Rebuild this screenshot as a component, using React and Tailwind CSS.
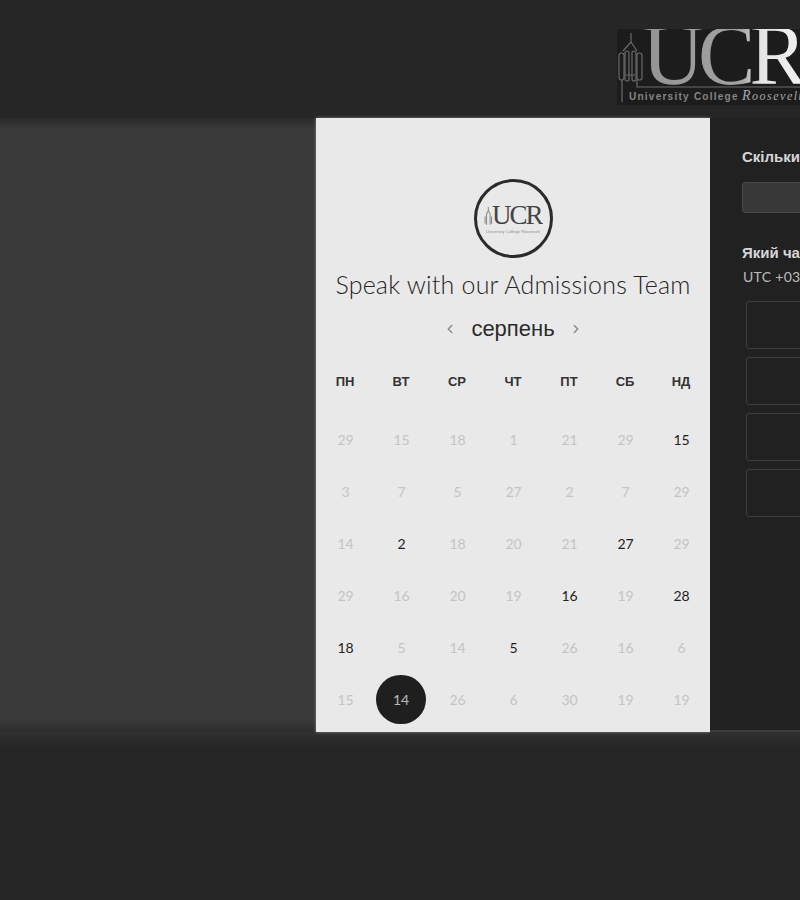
import React from 'react';
import { ChevronLeft, ChevronRight } from 'lucide-react';

const weekDays = ['ПН', 'ВТ', 'СР', 'ЧТ', 'ПТ', 'СБ', 'НД'];

// active: dark number, selected: black circle, the rest are disabled
const days = [
    [29, 15, 18, 1, 21, 29, { n: 15, active: true }],
    [3, 7, 5, 27, 2, 7, 29],
    [14, { n: 2, active: true }, 18, 20, 21, { n: 27, active: true }, 29],
    [29, 16, 20, 19, { n: 16, active: true }, 19, { n: 28, active: true }],
    [{ n: 18, active: true }, 5, 14, { n: 5, active: true }, 26, 16, 6],
    [15, { n: 14, selected: true }, 26, 6, 30, 19, 19],
];

function Tower({ stroke }) {
    return (
        <g fill="none" stroke={stroke} strokeWidth="1.2">
            <path d="M14 4v9M14 13l-8 9M14 13l6 9" />
            <rect x="2" y="24" width="5" height="27" rx="2.5" />
            <rect x="8" y="22" width="4" height="30" rx="2" />
            <rect x="15" y="22" width="4" height="30" rx="2" />
            <rect x="20" y="24" width="5" height="27" rx="2.5" />
            <path d="M9 46h9M5 51v22M20 51v7h163" />
        </g>
    );
}

function HeaderLogo() {
    return (
        <svg width="183" height="76" viewBox="0 0 183 76" className="block">
            <defs>
                <linearGradient id="ucrFill" x1="0" x2="1" y1="0" y2="0">
                    <stop offset="0" stopColor="#939393" />
                    <stop offset="0.6" stopColor="#a3a3a3" />
                    <stop offset="0.72" stopColor="#e6e6e6" />
                    <stop offset="1" stopColor="#f2f2f2" />
                </linearGradient>
            </defs>
            <rect width="183" height="76" fill="#1c1c1c" />
            <Tower stroke="#6a6a6a" />
            <text x="25" y="55" fontFamily='"Liberation Serif", serif' fontSize="86" letterSpacing="-6" fill="url(#ucrFill)">UCR</text>
            <text x="12" y="71" fontFamily='"Liberation Sans", sans-serif' fontWeight="700" fontSize="10" letterSpacing="1.25" fill="#858585">University College</text>
            <text x="125" y="71" fontFamily='"Liberation Serif", serif' fontStyle="italic" fontSize="12" letterSpacing="1.5" fill="#a8a8a8">
                <tspan fontSize="14">R</tspan>oosevelt
            </text>
        </svg>
    );
}

function BadgeLogo() {
    return (
        <svg width="60" height="32" viewBox="0 0 60 32" className="block">
            <g transform="translate(1 3) scale(0.36)" opacity="0.5">
                <path d="M12 3v10M12 13l-5 9v30M12 13l5 9v30M3 29v20M21 29v20" fill="none" stroke="#333" strokeWidth="3" />
            </g>
            <text x="9" y="21" fontFamily='"Liberation Serif", serif' fontSize="27" letterSpacing="-2" fill="#444444">UCR</text>
            <text x="3" y="30" fontFamily='"Liberation Sans", sans-serif' fontSize="4" letterSpacing="0.1" fill="#8a8a8a">University College Roosevelt</text>
        </svg>
    );
}

function DayCell({ day }) {
    const n = typeof day === 'object' ? day.n : day;

    if (day.selected) {
        return (
            <div className="h-[52px] flex items-center justify-center">
                <div className="w-[50px] h-[49px] rounded-full bg-[#1f1f1f] text-[#b9b9b9] text-[14px] flex items-center justify-center">{n}</div>
            </div>
        );
    }

    return (
        <div className={`h-[52px] pl-[1px] flex items-center justify-center text-[14px] ${day.active ? 'text-[#1f1f1f]' : 'text-[#c4c4c4]'}`}>
            {n}
        </div>
    );
}

export default function App() {
    return (
        <div className="w-[800px] h-[900px] overflow-hidden bg-[#262626] flex flex-col">
            <header className="h-[118px] shrink-0 pt-[29px] pl-[617px]">
                <HeaderLogo />
            </header>

            <main className="relative z-10 h-[614px] shrink-0 flex">
                <div className="w-[316px] shrink-0 bg-[linear-gradient(to_bottom,#2b2b2b_0px,#3a3a3a_12px,#3a3a3a_600px,#2d2d2d_100%)]"></div>

                <section className="w-[394px] shrink-0 bg-[#e9e9e9] shadow-[0_0_3px_rgba(255,255,255,0.4)] flex flex-col items-center font-['Lato',sans-serif]">
                    <div className="mt-[61px] w-[79px] h-[79px] rounded-full border-[3px] border-[#2b2b2b] flex items-center justify-center">
                        <BadgeLogo />
                    </div>
                    <h1 className="mt-[10px] text-[25px] leading-[32px] font-light tracking-[0.2px] text-[#262626] whitespace-nowrap">Speak with our Admissions Team</h1>
                    <div className="mt-[13px] h-[32px] flex items-center justify-center font-['Liberation_Sans',sans-serif] text-[#2b2b2b]">
                        <ChevronLeft strokeWidth={2.5} className="w-[14px] h-[14px] text-[#8a8a8a]" />
                        <span className="mx-[14px] text-[22px] leading-[32px]">серпень</span>
                        <ChevronRight strokeWidth={2.5} className="w-[14px] h-[14px] text-[#8a8a8a]" />
                    </div>
                    <div className="w-[392px] mt-[27px] grid grid-cols-7 font-['Liberation_Sans',sans-serif]">
                        {weekDays.map((d) => (
                            <div key={d} className="h-[20px] flex items-center justify-center text-[13px] font-bold text-[#333333]">{d}</div>
                        ))}
                    </div>
                    <div className="w-[392px] mt-[21px] grid grid-cols-7">
                        {days.flat().map((day, i) => (
                            <DayCell key={i} day={day} />
                        ))}
                    </div>
                </section>

                <section className="w-[500px] shrink-0 bg-[#212121] border-b-2 border-[#3c3c3c] pl-[32px] pt-[29px] font-['Liberation_Sans',sans-serif]">
                    <label className="block text-[15px] leading-[20px] font-bold text-[#d6d6d6] whitespace-nowrap">Скільки часу вам потрібно?</label>
                    <div className="mt-[15px] w-[400px] h-[31px] bg-[#383838] border border-[#4a4a4a] rounded-[3px]"></div>
                    <label className="block mt-[30px] text-[15px] leading-[20px] font-bold text-[#d6d6d6] whitespace-nowrap">Який час вам підходить?</label>
                    <p className="mt-[4px] ml-[1px] text-[14px] leading-[20px] tracking-[0.3px] text-[#bdbdbd] font-['Lato',sans-serif]">UTC +03:00</p>
                    <div className="mt-[14px] ml-[4px] flex flex-col gap-[8px]">
                        {[0, 1, 2, 3].map((i) => (
                            <div key={i} className="w-[400px] h-[48px] border border-[#3f3f3f] rounded-[3px]"></div>
                        ))}
                    </div>
                </section>
            </main>

            <footer className="flex-1 bg-[linear-gradient(to_bottom,#303030_0px,#262626_16px)]"></footer>
        </div>
    );
}
